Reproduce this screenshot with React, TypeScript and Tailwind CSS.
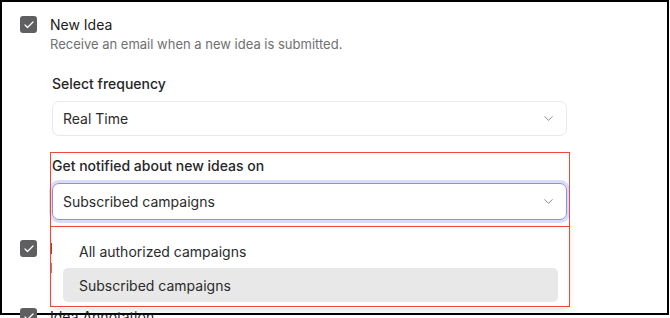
import { ChevronDown, Check } from 'lucide-react';

function Checkbox() {
  return (
    <div className="w-[17px] h-[17px] shrink-0 rounded-[3px] bg-[#5f5f61] flex items-center justify-center">
      <Check size={12} strokeWidth={2.5} className="text-white" />
    </div>
  );
}

function NotificationRow({ title, description, children }: { title: string; description: string; children?: React.ReactNode }) {
  return (
    <div className="flex gap-[13px]">
      <Checkbox />
      <div className="flex-1 min-w-0">
        <div className="text-[14px] leading-[16px] mt-[1px] text-[#1c1c1c]">{title}</div>
        <div className="text-[13px] leading-[18px] mt-[2px] text-[#707070]">{description}</div>
        {children}
      </div>
    </div>
  );
}

export default function App() {
  return (
    <div className="w-[670px] h-[318px] overflow-hidden bg-white relative" style={{ fontFamily: 'Inter, "Noto Sans", sans-serif' }}>
      <div className="w-[669px] h-[315px] border-2 border-black bg-white">
        <div className="pl-[18px] pt-[14px] pr-[100px] flex flex-col">
          <NotificationRow title="New Idea" description="Receive an email when a new idea is submitted.">
            <div className="ml-[2px] mt-[21px] w-[515px]">
              <div className="text-[14px] leading-[20px] text-[#262626] font-medium">Select frequency</div>
              <button className="mt-[7px] w-full h-[35px] rounded-[7px] border border-[#e9e9e9] px-[10px] flex items-center justify-between text-[14px] text-[#2b2b2b]">
                <span>Real Time</span>
                <ChevronDown size={15} strokeWidth={1.4} className="text-[#7a7a7a]" />
              </button>

              <div className="mt-[20px] text-[14px] leading-[20px] text-[#262626] font-medium">Get notified about new ideas on</div>
              <div className="relative mt-[7px]">
                <button className="w-full h-[37px] rounded-[7px] border-[1.5px] border-[#8a92de] ring-[3px] ring-[#dadcf5] px-[10px] flex items-center justify-between text-[14px] text-[#2b2b2b]">
                  <span>Subscribed campaigns</span>
                  <ChevronDown size={15} strokeWidth={1.4} className="text-[#7a7a7a]" />
                </button>
                {/* open menu */}
                <div className="absolute z-10 left-0 right-[-2px] top-[43px] bg-white rounded-b-[6px] shadow-[0_2px_6px_rgba(0,0,0,0.12)] px-[11px] pt-[8px] pb-[6px]">
                  <div className="h-[34px] flex items-center pl-[16px] rounded-[5px] text-[14px] text-[#2b2b2b]">All authorized campaigns</div>
                  <div className="h-[34px] flex items-center pl-[16px] rounded-[5px] bg-[#e8e8e8] text-[14px] text-[#2b2b2b]">Subscribed campaigns</div>
                </div>
              </div>
            </div>
          </NotificationRow>
          <div className="mt-[20px]">
            <NotificationRow title="New Comment" description="Receive an email when someone comments on an idea." />
          </div>
          <div className="mt-[31px]">
            <NotificationRow title="Idea Annotation" description="Receive an email when an idea is annotated." />
          </div>
        </div>
      </div>

      {/* annotation boxes */}
      <div className="absolute z-20 left-[50px] top-[152px] w-[520px] h-[75px] border-[1.5px] border-[#f0473b] pointer-events-none" />
      <div className="absolute z-20 left-[50px] top-[226px] w-[520px] h-[81px] border-[1.5px] border-[#f0473b] pointer-events-none" />
    </div>
  );
}
